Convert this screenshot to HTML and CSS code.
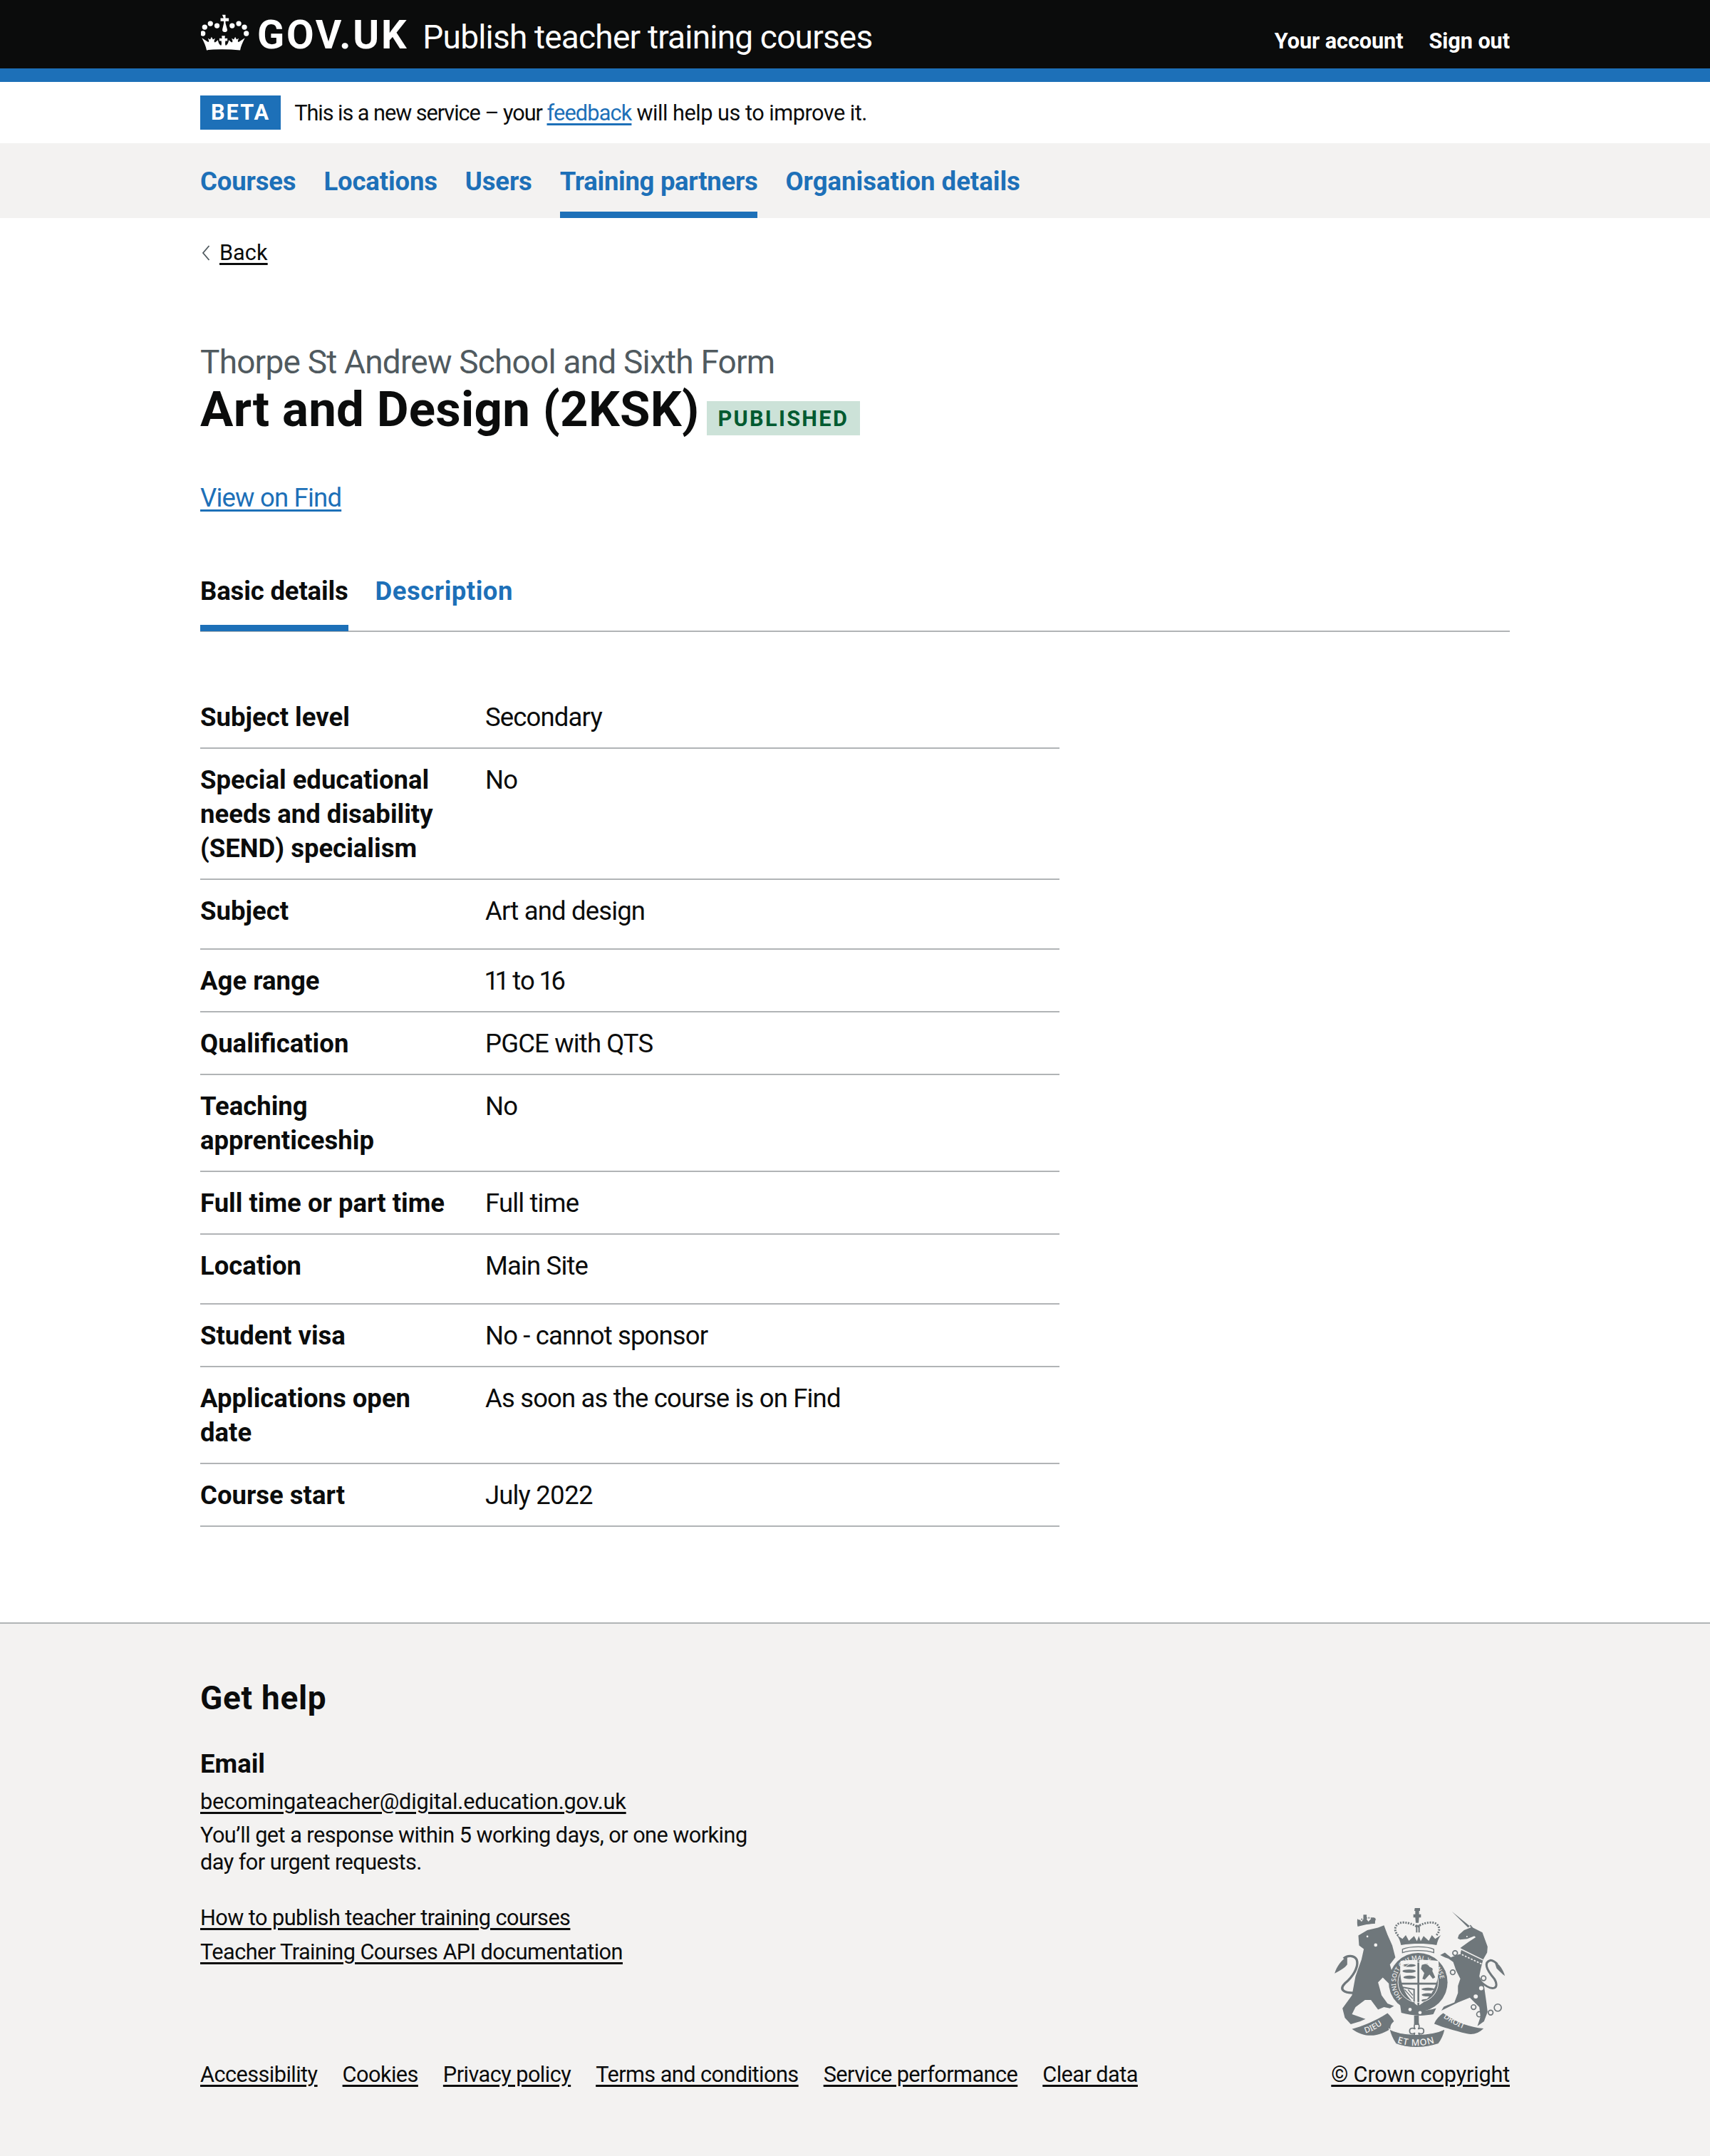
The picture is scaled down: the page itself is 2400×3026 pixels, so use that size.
FILE: index.html
```html
<!DOCTYPE html>
<html lang="en">
<head>
    <meta charset="UTF-8">
    <title>Art and Design (2KSK) - Publish teacher training courses</title>
    <link rel="stylesheet" href="styles.css">
</head>
<body>
    <header class="site-header">
        <div class="wrap header-inner">
            <svg class="header-crown" viewBox="36 30 208 156" aria-hidden="true">
                <g fill="#fff">
                    <path d="M126 32h14v14h14v13h-14v8l7 26c2 8-3 12-10 12s-12-4-10-12l6-26v-8h-14V46h13z"/>
                    <circle cx="52" cy="84" r="11"/><circle cx="76" cy="69" r="11"/><circle cx="104" cy="78" r="11"/>
                    <circle cx="168" cy="78" r="11"/><circle cx="196" cy="69" r="11"/><circle cx="220" cy="84" r="11"/>
                    <circle cx="44" cy="111" r="11"/><circle cx="228" cy="111" r="11"/>
                    <path d="M60 182c-2-14-10-32-20-52l24 16c3 3 6 1 6-3l-4-12 9 6 6-12 6 12 9-6-4 12c0 5 3 7 6 4l10-8c2 12 6 20 13 23 3-4 3-12 1-20l-8 1v-12l11 1-1-11h14l-1 11 11-1v12l-8-1c-2 8-2 16 1 20 7-3 11-11 13-23l10 8c3 3 6 1 6-4l-4-12 9 6 6-12 6 12 9-6-4 12c0 4 3 6 6 3l24-16c-10 20-18 38-20 52-50-5-102-5-152 0z"/>
                </g>
            </svg>
            <a class="header-logo" href="#">GOV.UK</a>
            <a class="header-service" href="#">Publish teacher training courses</a>
            <nav class="header-nav">
                <a href="#">Your account</a>
                <a href="#">Sign out</a>
            </nav>
        </div>
    </header>

    <div class="wrap phase-banner">
        <strong class="phase-tag">Beta</strong>
        <span class="phase-text"><span class="phase-lead">This is a new service – your </span><a href="#">feedback</a> will help us to improve it.</span>
    </div>

    <nav class="org-nav">
        <ul class="wrap org-nav-list">
            <li><a href="#">Courses</a></li>
            <li><a href="#">Locations</a></li>
            <li><a href="#">Users</a></li>
            <li class="active"><a href="#">Training partners</a></li>
            <li class="last"><a href="#">Organisation details</a></li>
        </ul>
    </nav>

    <main class="wrap main">
        <a class="back-link" href="#">
            <svg class="back-chevron" viewBox="0 0 12 22" aria-hidden="true"><path d="M10.5 1 2 11l8.5 10" fill="none" stroke="#505a5f" stroke-width="1.8"/></svg>
            <span>Back</span>
        </a>

        <span class="caption">Thorpe St Andrew School and Sixth Form</span>
        <div class="title-row">
            <h1>Art and Design (2KSK)</h1>
            <strong class="tag">Published</strong>
        </div>

        <p class="view-link"><a href="#">View on Find</a></p>

        <ul class="tabs">
            <li class="selected"><a href="#">Basic details</a></li>
            <li><a href="#">Description</a></li>
        </ul>

        <dl class="summary">
            <div class="row"><dt>Subject level</dt><dd>Secondary</dd></div>
            <div class="row"><dt>Special educational needs and disability (SEND) specialism</dt><dd>No</dd></div>
            <div class="row row-extra"><dt>Subject</dt><dd>Art and design</dd></div>
            <div class="row"><dt>Age range</dt><dd>11 to 16</dd></div>
            <div class="row"><dt>Qualification</dt><dd>PGCE with QTS</dd></div>
            <div class="row"><dt>Teaching apprenticeship</dt><dd>No</dd></div>
            <div class="row"><dt>Full time or part time</dt><dd>Full time</dd></div>
            <div class="row row-extra"><dt>Location</dt><dd>Main Site</dd></div>
            <div class="row"><dt>Student visa</dt><dd>No - cannot sponsor</dd></div>
            <div class="row"><dt>Applications open date</dt><dd>As soon as the course is on Find</dd></div>
            <div class="row"><dt>Course start</dt><dd>July 2022</dd></div>
        </dl>
    </main>

    <footer class="footer">
        <div class="wrap footer-inner">
            <div class="footer-left">
                <h2>Get help</h2>
                <h3>Email</h3>
                <p class="footer-email"><a href="#">becomingateacher@digital.education.gov.uk</a></p>
                <p class="footer-note">You’ll get a response within 5 working days, or one working day for urgent requests.</p>
                <ul class="footer-guides">
                    <li><a href="#">How to publish teacher training courses</a></li>
                    <li><a href="#">Teacher Training Courses API documentation</a></li>
                </ul>
                <ul class="footer-meta">
                    <li><a href="#">Accessibility</a></li>
                    <li><a href="#">Cookies</a></li>
                    <li><a href="#">Privacy policy</a></li>
                    <li><a href="#">Terms and conditions</a></li>
                    <li><a href="#">Service performance</a></li>
                    <li><a href="#">Clear data</a></li>
                </ul>
            </div>
            <div class="footer-right">
                <svg class="arms" viewBox="150 100 750 610" aria-hidden="true">
                    <defs>
                        <path id="ring-path" d="M447 491A94 94 0 1 1 573 498"/>
                        <path id="dieu-path" d="M292 640C325 630 360 610 392 580"/>
                        <path id="etmon-path" d="M425 680C480 698 540 698 600 674"/>
                        <path id="droit-path" d="M620 574C655 598 695 620 742 634"/>
                    </defs>
                    <g fill="#6f777b">
                        <!-- lion -->
                        <path d="M262 228 300 205l45-10 25-10 15 40 20 45 13 50-23 30 20 70-25 10-25-25-20 20 15 55 25 35 27 10-17 10-25-5-25 10-30-40h-25l-40 30-15 30 30 10 27 10-22 10-40 12-25-27-10-40 40-55 15-80 25-70 10-45-20-15z"/>
                        <path d="M259 190c-3-12-2-25-1-32l18 11 14-20 14 20 18-18 12 3-2 24c-20 0-50 5-73 12z"/>
                        <path d="M283 140h14v14h-14z"/>
                        <path d="M215 318c-25 12-45 42-53 70 23-13 43-23 53-38z"/>
                        <!-- unicorn -->
                        <path d="M657 127l68 68 10-12 10 12 40 20 22 60-2 25-17 30-10 40-6 30 20 40 10 70 5 40-15 40-28 20 13-40-5-40-40-40-50 20-40 20-30 15 10-17 45-18 15-40v-30l10-30-18-35-12-35-20-15-15-5-20-10 20-10 25 20 40-15 5-20-5-5 35-25 30-20-6-5-30 12-30 3-10-5 5-15 22-20 30-12z"/>
                        <path d="M880 398c-12-8-24-20-35-32l-10-30c20 10 38 36 45 62z"/>
                        <!-- crown -->
                        <path d="M500 112h22v12h-4v14h8v14h-8l-2 22h-12l-2-22h-8v-14h8v-14h-4z"/>
                        <path d="M505 183h6v32h-6zM515 183h6v32h-6z"/>
                        <path d="M442 268c-3-14-8-30-18-42l24 16 14-16 13 24 22-20 12 22 8-22 8 22 12-22 22 20 13-24 14 16 24-16c-10 12-15 28-18 42-50-8-100-8-150 0z"/>
                        <!-- ring and shield -->
                        <circle cx="514" cy="425" r="124"/>
                        <path d="M440 335c50-6 105-6 160 0 6 85-20 150-86 190-62-40-82-105-74-190z" fill="#f3f2f1"/>
                        <path d="M511 332h8v195h-8zM430 427h172v8H430z"/>
                        <!-- quarters -->
                        <g>
                            <ellipse cx="476" cy="354" rx="28" ry="6"/><ellipse cx="476" cy="378" rx="28" ry="7"/><ellipse cx="478" cy="404" rx="26" ry="7"/>
                            <ellipse cx="556" cy="454" rx="28" ry="6"/><ellipse cx="556" cy="478" rx="27" ry="7"/><ellipse cx="548" cy="502" rx="20" ry="6"/>
                            <path d="M530 352l22-6 10 14 14 6-2 12 12 26-10 6-14-18-20 22-10-4 8-24-14-18z"/>
                        </g>
                        <path d="M449 446l48 9v56h-14c-20-15-30-35-34-65z" fill="none" stroke="#6f777b" stroke-width="6"/>
                        <path d="M457 456l34 38M472 456l20 24M454 474l26 30" stroke="#6f777b" stroke-width="4"/>
                        <!-- garter tail under the ring -->
                        <path d="M438 520c45 30 105 30 152 14l-12 26c-50 10-95 5-135-6z"/>
                        <!-- stem over the fleur -->
                        <path d="M497 565h20v40h-20z"/>
                        <!-- scrolls -->
                        <path d="M235 622c40-10 95-32 150-67 10 10 20 20 27 35-12 10-16 20-15 32-30 20-95 50-162 0z"/>
                        <path d="M582 600c8-20 23-35 38-45 40 30 100 60 170 65-20 20-45 28-70 22-50-12-100-27-138-42z"/>
                        <path d="M392 622c48 28 168 33 236 0-6 28-16 48-28 63-60 20-130 20-180 0-12-17-22-37-28-63z" stroke="#f3f2f1" stroke-width="4"/>
                    </g>
                    <g fill="none" stroke="#6f777b">
                        <path d="M240 470c-40 0-60-15-35-40 35-30 60-70 50-100-10-20-40-20-55-5" stroke-width="10"/>
                        <path d="M775 420c55 50 85 30 60-10-35-40-45-70-15-78 12 1 20 8 28 16" stroke-width="9"/>
                        <g stroke-width="5">
                            <circle cx="670" cy="302" r="10"/><circle cx="660" cy="383" r="10"/><circle cx="790" cy="408" r="10"/>
                            <circle cx="748" cy="530" r="10"/><circle cx="772" cy="560" r="11"/><circle cx="820" cy="553" r="10"/><circle cx="850" cy="532" r="15"/>
                        </g>
                        <path d="M430 228c-25-25-10-55 20-55 30 0 50 12 60 18 10-6 30-18 60-18 30 0 45 30 20 55" stroke-width="9" stroke-dasharray="6 5"/>
                        <path d="M262 175c0-20 60-30 72-12" stroke-width="6" stroke-dasharray="5 5"/>
                        <path d="M448 286c30-14 105-14 132 0v14c-30-12-102-12-132 0z" stroke-width="4"/>
                        <!-- fleur -->
                        <path d="M508 592c14 12 12 24 6 30 10-6 24-4 24 8 0 14-16 16-22 8l4 14h-24l4-14c-6 8-22 6-22-8 0-12 14-14 24-8-6-6-8-18 6-30z" stroke-width="5"/>
                    </g>
                    <g fill="none" stroke="#f3f2f1">
                        <circle cx="514" cy="425" r="85" stroke-width="3"/>
                        <path d="M692 284l96 47" stroke-width="5"/>
                        <path d="M686 302l96 46" stroke-width="5" stroke-dasharray="8 6"/>
                        <path d="M600 320l34 10" stroke-width="5"/>
                    </g>
                    <g fill="#f3f2f1" font-family="'Noto Sans', sans-serif">
                        <circle cx="780" cy="450" r="9"/><circle cx="757" cy="485" r="9"/>
                        <circle cx="335" cy="268" r="7"/><circle cx="300" cy="232" r="4"/><circle cx="720" cy="232" r="3"/>
                        <circle cx="480" cy="540" r="7"/><circle cx="522" cy="553" r="7"/>
                        <text font-size="26" font-weight="500"><textPath href="#ring-path">HONI SOIT QUI MAL Y PENSE</textPath></text>
                        <text font-size="34" font-weight="500"><textPath href="#dieu-path">DIEU</textPath></text>
                        <text font-size="38" font-weight="500"><textPath href="#etmon-path" letter-spacing="3">ET MON</textPath></text>
                        <text font-size="32" font-weight="500"><textPath href="#droit-path">DROIT</textPath></text>
                    </g>
                </svg>
                <a class="copyright" href="#">© Crown copyright</a>
            </div>
        </div>
    </footer>
</body>
</html>
```

FILE: styles.css
```css
* {
    box-sizing: border-box;
}
body {
    margin: 0;
    font-family: Roboto, Arial, sans-serif;
    font-size: 36.5px;
    line-height: 48px;
    color: #0b0c0c;
    background: #fff;
}
ul, dl, dd, p, h1, h2, h3 {
    margin: 0;
    padding: 0;
}
ul {
    list-style: none;
}
a {
    color: #0b0c0c;
    text-decoration-thickness: 3px;
    text-underline-offset: 4px;
}
.wrap {
    width: 1838px;
    margin: 0 auto;
}

/* header */
.site-header {
    height: 115px;
    background: #0b0c0c;
    border-bottom: 19px solid #1d70b8;
}
.header-inner {
    display: flex;
    align-items: baseline;
    padding-top: 21px;
    color: #fff;
}
.header-inner a {
    color: #fff;
    text-decoration: none;
}
.header-crown {
    align-self: flex-start;
    width: 69px;
    height: 52px;
    margin: -1px 10px 0 1px;
}
.header-logo {
    font-size: 56px;
    line-height: 56px;
    font-weight: 700;
    letter-spacing: 2.8px;
    margin-right: 20px;
}
.header-service {
    font-size: 46px;
    line-height: 56px;
    letter-spacing: -0.8px;
}
.header-nav {
    display: flex;
    gap: 36px;
    margin-left: auto;
    font-size: 30.7px;
    font-weight: 700;
    letter-spacing: -0.1px;
}

/* beta banner */
.phase-banner {
    display: flex;
    align-items: center;
    gap: 19px;
    height: 86px;
    font-size: 30.7px;
}
.phase-text {
    margin-top: 2px;
    letter-spacing: -0.5px;
}
.phase-lead {
    letter-spacing: -1.05px;
}
.phase-banner a {
    color: #1d70b8;
    letter-spacing: -0.85px;
}
.phase-tag {
    height: 48px;
    padding: 0 15px;
    background: #1d70b8;
    color: #fff;
    line-height: 48px;
    letter-spacing: 2px;
    text-transform: uppercase;
}

/* organisation nav */
.org-nav {
    height: 105px;
    background: #f3f2f1;
}
.org-nav-list {
    display: flex;
    gap: 39px;
    height: 105px;
    font-weight: 700;
    letter-spacing: -0.15px;
}
.org-nav-list a {
    display: block;
    padding-top: 30px;
    color: #1d70b8;
    text-decoration: none;
}
.org-nav-list .active {
    border-bottom: 9px solid #1d70b8;
    letter-spacing: -0.3px;
}
.org-nav-list .last {
    letter-spacing: 0;
}

/* main */
.main {
    padding-bottom: 134px;
}
.back-link {
    display: flex;
    align-items: center;
    gap: 13px;
    width: fit-content;
    margin-top: 30px;
    padding-left: 2px;
    font-size: 30.7px;
    line-height: 38px;
}
.back-link span {
    text-decoration: underline;
    text-decoration-thickness: 3px;
    text-underline-offset: 4px;
}
.back-chevron {
    width: 12px;
    height: 22px;
}
.caption {
    display: block;
    margin-top: 105px;
    color: #505a5f;
    font-size: 46px;
    line-height: 58px;
    letter-spacing: -0.8px;
}
.title-row {
    display: flex;
    margin-top: -1px;
}
h1 {
    font-size: 69px;
    line-height: 77px;
    font-weight: 700;
    letter-spacing: 0.28px;
}
.tag {
    height: 48px;
    margin: 27px 0 0 10px;
    padding: 0 16px;
    background: #cce2d8;
    color: #005a30;
    font-size: 30.7px;
    line-height: 50px;
    letter-spacing: 2.3px;
    text-transform: uppercase;
}
.view-link {
    margin-top: 62px;
    letter-spacing: -0.8px;
}
.view-link a {
    color: #1d70b8;
}
.tabs {
    display: flex;
    gap: 38px;
    margin-top: 83px;
    border-bottom: 2px solid #b1b4b6;
    font-weight: 700;
    letter-spacing: 0.5px;
}
.tabs li {
    margin-bottom: -1px;
    padding-bottom: 23px;
    border-bottom: 9px solid transparent;
}
.tabs a {
    color: #1d70b8;
    text-decoration: none;
}
.tabs .selected {
    border-bottom-color: #1d70b8;
    letter-spacing: -0.15px;
}
.tabs .selected a {
    color: #0b0c0c;
}

/* summary list */
.summary {
    width: 1206px;
    margin-top: 76px;
}
.row {
    display: grid;
    grid-template-columns: 400px 1fr;
    padding: 20px 0 18px;
    border-bottom: 2px solid #b1b4b6;
}
.row-extra {
    padding-bottom: 28px;
}
.row dt {
    font-weight: 700;
    padding-right: 30px;
}
.row dd {
    letter-spacing: -0.85px;
    font-variant-numeric: proportional-nums;
}

/* footer */
.footer {
    background: #f3f2f1;
    border-top: 2px solid #b1b4b6;
    font-size: 30.7px;
    line-height: 38px;
    letter-spacing: -0.55px;
}
.footer-inner {
    display: flex;
    justify-content: space-between;
    padding: 75px 0 95px;
}
.footer h2 {
    font-size: 46px;
    line-height: 58px;
    font-weight: 700;
    letter-spacing: 0.7px;
}
.footer h3 {
    margin-top: 40px;
    font-size: 36.5px;
    line-height: 48px;
    font-weight: 700;
    letter-spacing: 0;
}
.footer-email {
    margin-top: 10px;
    letter-spacing: -0.2px;
}
.footer-note {
    width: 790px;
    margin-top: 9px;
}
.footer-guides {
    margin-top: 40px;
}
.footer-guides li + li {
    margin-top: 10px;
}
.footer-meta {
    display: flex;
    gap: 35px;
    margin-top: 134px;
}
.footer-right {
    display: flex;
    flex-direction: column;
    align-items: flex-end;
    justify-content: flex-end;
    letter-spacing: -0.2px;
}
.arms {
    display: block;
    width: 250px;
    height: 203px;
    margin-bottom: 16px;
}
```
